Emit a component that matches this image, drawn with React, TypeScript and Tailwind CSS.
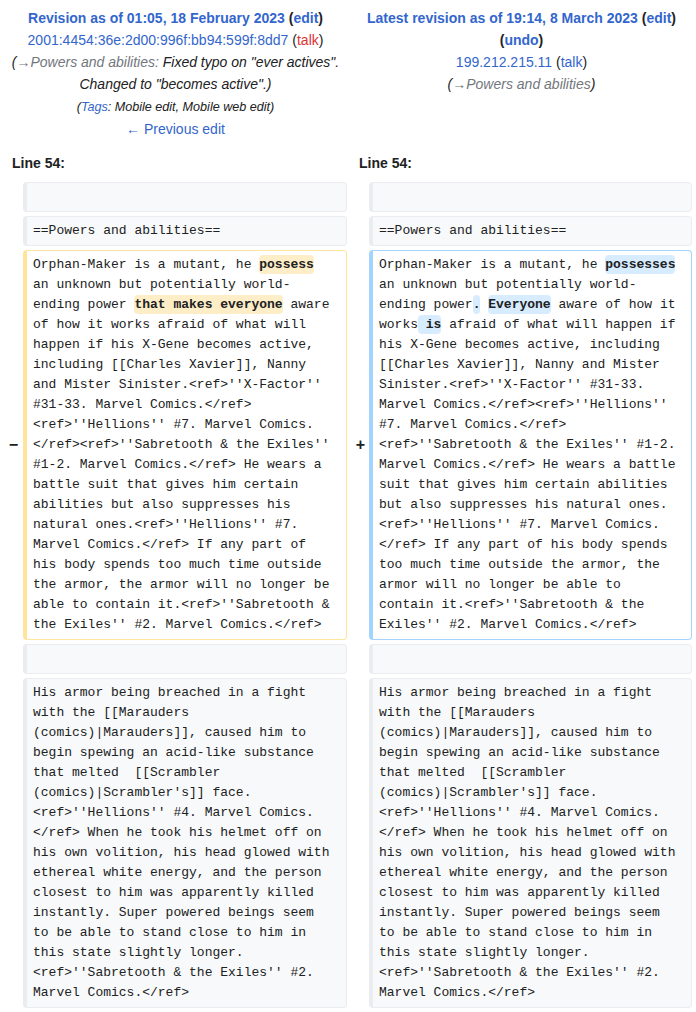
const mono = "font-['Liberation_Mono','DejaVu_Sans_Mono',monospace] text-[13px] leading-[20px]";
const boxBase = "border border-l-4 rounded-[4px] py-1 pl-[6px] pr-1 " + mono;
const ctx = boxBase + " bg-[#f8f9fa] border-[#eaecf0]";
const del = boxBase + " bg-white border-[#ffe49c]";
const add = boxBase + " bg-white border-[#a3d3ff]";

function D({ children }: any) {
  return <span className="bg-[#feeec8] rounded-[4px] py-[2px] font-bold">{children}</span>;
}

function A({ children }: any) {
  return <span className="bg-[#d8ecff] rounded-[4px] py-[2px] font-bold">{children}</span>;
}

function Lines({ lines }: { lines: any[] }) {
  return (
    <>
      {lines.map((l, i) => (
        <div key={i} className="whitespace-pre">
          {l}
        </div>
      ))}
    </>
  );
}

const oldLines = [
  <>Orphan-Maker is a mutant, he <D>possess</D></>,
  "an unknown but potentially world-",
  <>ending power <D>that makes everyone</D> aware</>,
  "of how it works afraid of what will",
  "happen if his X-Gene becomes active,",
  "including [[Charles Xavier]], Nanny",
  "and Mister Sinister.<ref>''X-Factor''",
  "#31-33. Marvel Comics.</ref>",
  "<ref>''Hellions'' #7. Marvel Comics.",
  "</ref><ref>''Sabretooth & the Exiles''",
  "#1-2. Marvel Comics.</ref> He wears a",
  "battle suit that gives him certain",
  "abilities but also suppresses his",
  "natural ones.<ref>''Hellions'' #7.",
  "Marvel Comics.</ref> If any part of",
  "his body spends too much time outside",
  "the armor, the armor will no longer be",
  "able to contain it.<ref>''Sabretooth &",
  "the Exiles'' #2. Marvel Comics.</ref>",
];

const newLines = [
  <>Orphan-Maker is a mutant, he <A>possesses</A></>,
  "an unknown but potentially world-",
  <>ending power<A>.</A> <A>Everyone</A> aware of how it</>,
  <>works<A> is</A> afraid of what will happen if</>,
  "his X-Gene becomes active, including",
  "[[Charles Xavier]], Nanny and Mister",
  "Sinister.<ref>''X-Factor'' #31-33.",
  "Marvel Comics.</ref><ref>''Hellions''",
  "#7. Marvel Comics.</ref>",
  "<ref>''Sabretooth & the Exiles'' #1-2.",
  "Marvel Comics.</ref> He wears a battle",
  "suit that gives him certain abilities",
  "but also suppresses his natural ones.",
  "<ref>''Hellions'' #7. Marvel Comics.",
  "</ref> If any part of his body spends",
  "too much time outside the armor, the",
  "armor will no longer be able to",
  "contain it.<ref>''Sabretooth & the",
  "Exiles'' #2. Marvel Comics.</ref>",
];

const armorLines = [
  "His armor being breached in a fight",
  "with the [[Marauders",
  "(comics)|Marauders]], caused him to",
  "begin spewing an acid-like substance",
  "that melted  [[Scrambler",
  "(comics)|Scrambler's]] face.",
  "<ref>''Hellions'' #4. Marvel Comics.",
  "</ref> When he took his helmet off on",
  "his own volition, his head glowed with",
  "ethereal white energy, and the person",
  "closest to him was apparently killed",
  "instantly. Super powered beings seem",
  "to be able to stand close to him in",
  "this state slightly longer.",
  "<ref>''Sabretooth & the Exiles'' #2.",
  "Marvel Comics.</ref>",
];

export default function App() {
  return (
    <div className="w-[696px] bg-white px-1 text-[#202122] font-['Liberation_Sans',Arial,sans-serif] text-[14px] leading-[22px]">
      {/* revision headers */}
      <div className="grid grid-cols-[343px_341px] gap-x-1 pt-[7px] text-center">
        <div>
          <div>
            <a className="font-bold text-[#3366cc]">Revision as of 01:05, 18 February 2023</a>{" "}
            <b>
              (<a className="text-[#3366cc]">edit</a>)
            </b>
          </div>
          <div>
            <a className="text-[#3366cc]">2001:4454:36e:2d00:996f:bb94:599f:8dd7</a> (
            <a className="text-[#dd3333]">talk</a>)
          </div>
          <div className="italic">
            (<span className="text-[#72777d]">→Powers and abilities:</span> Fixed typo on "ever actives".
            <br />
            Changed to "becomes active".)
          </div>
          <div className="mt-[1px] text-[12.6px] italic">
            (<a className="text-[#3366cc]">Tags</a>: Mobile edit, Mobile web edit)
          </div>
          <div>
            <a className="text-[#3366cc]">← Previous edit</a>
          </div>
        </div>
        <div>
          <div>
            <a className="font-bold text-[#3366cc]">Latest revision as of 19:14, 8 March 2023</a>{" "}
            <b>
              (<a className="text-[#3366cc]">edit</a>)
            </b>
          </div>
          <div>
            <b>
              (<a className="text-[#3366cc]">undo</a>)
            </b>
          </div>
          <div>
            <a className="text-[#3366cc]">199.212.215.11</a> (<a className="text-[#3366cc]">talk</a>)
          </div>
          <div className="italic">
            (<span className="text-[#72777d]">→Powers and abilities</span>)
          </div>
        </div>
      </div>

      {/* line numbers */}
      <div className="grid grid-cols-[343px_341px] gap-x-1 mt-[12px] font-bold">
        <div className="pl-2">Line 54:</div>
        <div className="pl-2">Line 54:</div>
      </div>

      {/* diff body */}
      <div className="grid grid-cols-[15px_324px_14px_323px] gap-1 mt-[8px]">
        <div />
        <div className={ctx + " h-[30px]"} />
        <div />
        <div className={ctx + " h-[30px]"} />

        <div />
        <div className={ctx}>==Powers and abilities==</div>
        <div />
        <div className={ctx}>==Powers and abilities==</div>

        <div className="flex items-center justify-end text-[16px] font-bold pr-[1px]">−</div>
        <div className={del}>
          <Lines lines={oldLines} />
        </div>
        <div className="flex items-center justify-end text-[16px] font-bold">+</div>
        <div className={add}>
          <Lines lines={newLines} />
        </div>

        <div />
        <div className={ctx + " h-[30px]"} />
        <div />
        <div className={ctx + " h-[30px]"} />

        <div />
        <div className={ctx}>
          <Lines lines={armorLines} />
        </div>
        <div />
        <div className={ctx}>
          <Lines lines={armorLines} />
        </div>
      </div>
    </div>
  );
}
